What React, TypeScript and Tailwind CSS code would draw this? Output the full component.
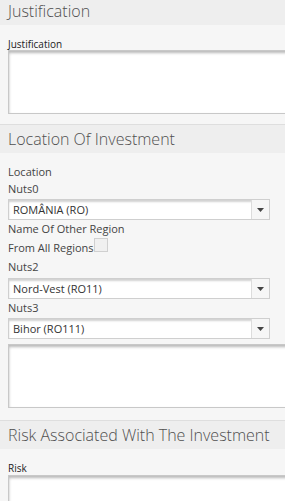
const Header = ({ title, first }: { title: string; first?: boolean }) => (
  <div
    className={
      first
        ? "h-[25px] bg-[#eeeeee] px-[8px] text-[16px] leading-[25px] font-light text-[#505050]"
        : "h-[29px] bg-[#eeeeee] border-t border-[#dedede] px-[8px] text-[16px] leading-[28px] font-light text-[#505050]"
    }
  >
    <span className={first ? "relative -top-[1px]" : ""}>{title}</span>
  </div>
);

const TextArea = ({ h }: { h: string }) => (
  <div
    className={`${h} w-[300px] shrink-0 bg-white border border-[#c8c8c8] shadow-[inset_0_2px_3px_rgba(0,0,0,0.28)]`}
  />
);

const Select = ({ value }: { value: string }) => (
  <div className="h-[21px] w-[262px] flex bg-white border border-[#cfcfcf] shadow-[inset_0_2px_2px_rgba(0,0,0,0.18)]">
    <div className="flex-1 px-[4px] text-[11px] leading-[19px] text-[#333]">{value}</div>
    <div className="w-[18px] border-l border-[#dcdcdc] bg-[#f6f6f6] flex items-center justify-center">
      <svg width="7" height="4" viewBox="0 0 7 4">
        <path d="M0 0h7L3.5 4z" fill="#444" />
      </svg>
    </div>
  </div>
);

const Label = ({ text, h }: { text: string; h: string }) => (
  <div className={`${h} flex items-center text-[11px] text-[#444]`}>{text}</div>
);

export default function App() {
  return (
    <div className="w-[285px] h-[501px] overflow-hidden bg-[#f6f6f6] font-['Open_Sans',sans-serif]">
      <Header title="Justification" first />
      <div className="px-[8px] pt-[13px] pb-[10px]">
        <div className="h-[12px] leading-[12px] text-[10px] text-[#222]">Justification</div>
        <TextArea h="h-[64px]" />
      </div>

      <Header title="Location Of Investment" />
      <div className="px-[8px] pt-[10px] pb-[12px]">
        <Label text="Location" h="h-[18px]" />
        <Label text="Nuts0" h="h-[17px]" />
        <div className="mt-[1px]">
          <Select value="ROMÂNIA (RO)" />
        </div>
        <Label text="Name Of Other Region" h="h-[18px]" />
        <div className="h-[20px] flex items-center text-[11px] text-[#444]">
          <span>From All Regions</span>
          <span className="w-[14px] h-[14px] -mt-[6px] bg-[#f0f0f0] border border-[#d0d0d0]" />
        </div>
        <Label text="Nuts2" h="h-[19px]" />
        <div className="mt-[1px]">
          <Select value="Nord-Vest (RO11)" />
        </div>
        <Label text="Nuts3" h="h-[19px]" />
        <Select value="Bihor (RO111)" />
        <div className="mt-[5px]">
          <TextArea h="h-[64px]" />
        </div>
      </div>

      <Header title="Risk Associated With The Investment" />
      <div className="px-[8px] pt-[13px]">
        <div className="h-[13px] leading-[13px] text-[10px] text-[#222]">Risk</div>
        <TextArea h="h-[64px]" />
      </div>
    </div>
  );
}
